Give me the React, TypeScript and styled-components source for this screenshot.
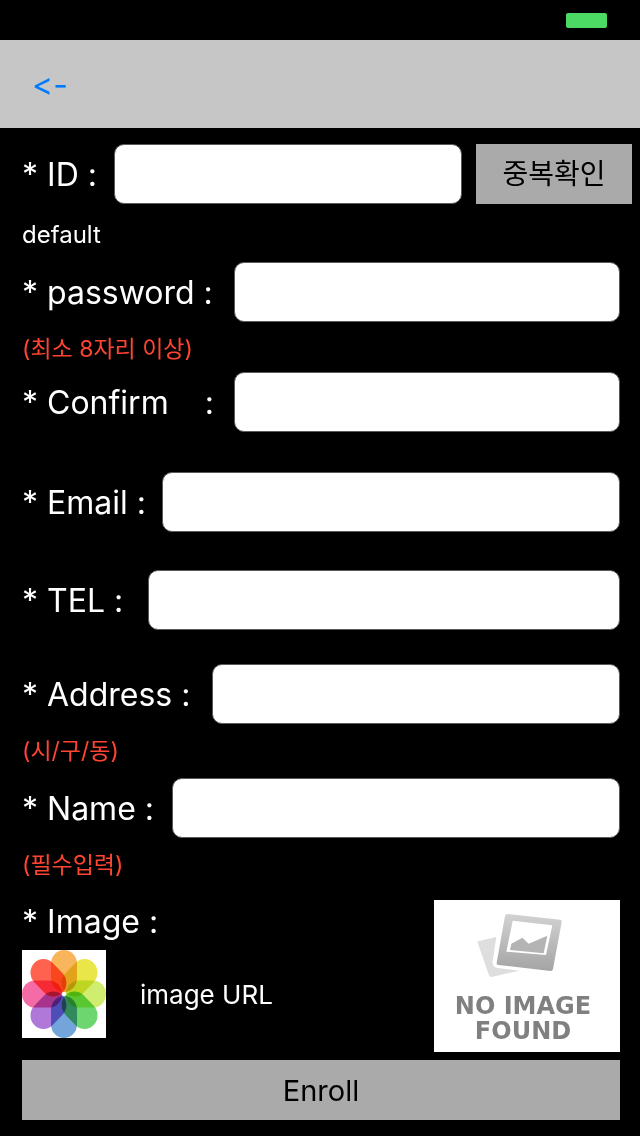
import React from 'react';
import styled, { createGlobalStyle } from 'styled-components';

const GlobalStyle = createGlobalStyle`
  * { box-sizing: border-box; }
  body {
    margin: 0;
    background: #000;
    color: #fff;
    font-family: Inter, 'Noto Sans CJK KR', sans-serif;
    font-variant-ligatures: none;
  }
`;

const Screen = styled.div`
  display: flex;
  flex-direction: column;
  min-height: 100vh;
  background: #000;
`;

const StatusBar = styled.div`
  display: flex;
  align-items: center;
  justify-content: flex-end;
  height: 40px;
  padding-right: 33px;
`;

const Battery = styled.span`
  width: 41px;
  height: 15px;
  border-radius: 2px;
  background: #4cd964;
`;

const NavBar = styled.header`
  display: flex;
  align-items: center;
  height: 88px;
  padding: 2px 32px 0;
  background: #c6c6c6;
`;

const BackButton = styled.button`
  padding: 0;
  border: 0;
  background: none;
  color: #007aff;
  font: inherit;
  font-size: 32px;
  line-height: 40px;
  font-variant-ligatures: none;
`;

const Form = styled.form`
  display: flex;
  flex-direction: column;
  padding: 16px 20px 16px 22px;
`;

const Group = styled.div<{ $gap: number }>`
  margin-bottom: ${(p) => p.$gap}px;
`;

const Row = styled.div<{ $wide?: boolean }>`
  display: flex;
  align-items: center;
  height: 60px;
  margin-right: ${(p) => (p.$wide ? '-12px' : '0')};
`;

const Label = styled.label<{ $width: number }>`
  flex: 0 0 ${(p) => p.$width}px;
  padding-top: 2px;
  font-size: 32px;
  line-height: 40px;
  white-space: pre;
`;

const Field = styled.input`
  flex: 1;
  min-width: 0;
  height: 60px;
  padding: 0 14px;
  border: 1px solid #5a5a5a;
  border-radius: 10px;
  background: #fff;
  color: #000;
  font: inherit;
  font-size: 28px;
`;

const Help = styled.p<{ $top: number; $error?: boolean }>`
  margin: ${(p) => p.$top}px 0 0;
  color: ${(p) => (p.$error ? '#ff4432' : '#fff')};
  font-size: ${(p) => (p.$error ? 23 : 24)}px;
  line-height: 30px;
`;

const GrayButton = styled.button`
  height: 60px;
  padding: 0;
  border: 0;
  background: #aaa;
  color: #000;
  font: inherit;
  font-size: 29px;
`;

const CheckButton = styled(GrayButton)`
  flex: 0 0 156px;
  margin-left: 14px;
  padding-bottom: 4px;
  font-size: 28px;
`;

const ImageSection = styled.section`
  display: flex;
  justify-content: space-between;
  margin-bottom: 8px;
`;

const ImageTitle = styled.h2`
  margin: 2px 0 8px;
  font-size: 32px;
  font-weight: 400;
  line-height: 40px;
`;

const Picker = styled.div`
  display: flex;
  align-items: center;
  gap: 34px;
  font-size: 26px;
`;

const PickButton = styled.button`
  display: flex;
  padding: 0;
  border: 0;
  background: #fff;
`;

const Preview = styled.div`
  display: flex;
  flex-direction: column;
  align-items: center;
  width: 186px;
  height: 152px;
  padding-top: 12px;
  padding-right: 8px;
  background: #fff;
`;

const PreviewText = styled.p`
  margin: 0;
  color: #808080;
  font: bold 24px/25px 'DejaVu Sans', sans-serif;
  text-align: center;
`;

const PreviewIcon = styled.svg`
  flex: none;
  margin-right: 4px;
  margin-bottom: 14px;
`;

const petals = ['#f8b55c', '#e9e64a', '#d0ed70', '#6dd66e', '#73a5da', '#af78d9', '#f56ba6', '#ff6350'];

const FlowerIcon = () => (
  <svg width="84" height="88" viewBox="0 0 84 84" preserveAspectRatio="none" aria-hidden="true">
    <rect width="84" height="84" fill="#fff" />
    {petals.map((color, i) => (
      <rect
        key={color}
        x="29"
        y="0"
        width="26"
        height="40"
        rx="13"
        fill={color}
        transform={`rotate(${i * 45} 42 42)`}
        style={{ mixBlendMode: 'multiply' }}
      />
    ))}
  </svg>
);

const NoImageIcon = () => (
  <PreviewIcon width="90" height="68" viewBox="158 54 270 204" aria-hidden="true">
    <defs>
      <linearGradient id="frame" x1="0" y1="0" x2="0" y2="1">
        <stop offset="0" stopColor="#d2d2d2" />
        <stop offset="1" stopColor="#a4a4a4" />
      </linearGradient>
    </defs>
    <path d="M167 141L219 129L208 202Q207 220 221 222L288 230L204 249Q199 249 197 244L163 146Q162 142 167 141Z" fill="#dedede" />
    <path
      d="M252 60L410 77Q416 78 415 84L389 225Q388 231 382 231L225 213Q219 212 220 206L245 66Q247 60 252 60Z"
      fill="url(#frame)"
    />
    <path d="M268 80L387 94L368 183L249 173Z" fill="#fff" />
    <path d="M264 149L297 131L316 149L372 125L361 178L260 168Z" fill="#b4b4b4" />
  </PreviewIcon>
);

interface InputRowProps {
  id: string;
  label: string;
  width: number;
  type?: string;
}

const InputRow = ({ id, label, width, type = 'text' }: InputRowProps) => (
  <Row>
    <Label htmlFor={id} $width={width}>{label}</Label>
    <Field id={id} type={type} />
  </Row>
);

export default function App() {
  return (
    <Screen>
      <GlobalStyle />
      <StatusBar><Battery /></StatusBar>
      <NavBar><BackButton type="button">&lt;-</BackButton></NavBar>
      <Form onSubmit={(e) => e.preventDefault()}>
        <Group $gap={12}>
          <Row $wide>
            <Label htmlFor="userId" $width={92}>* ID :</Label>
            <Field id="userId" type="text" />
            <CheckButton type="button">중복확인</CheckButton>
          </Row>
          <Help $top={16}>default</Help>
        </Group>
        <Group $gap={8}>
          <InputRow id="password" label="* password :" width={212} type="password" />
          <Help $top={12} $error>(최소 8자리 이상)</Help>
        </Group>
        <Group $gap={40}>
          <InputRow id="confirm" label="* Confirm    :" width={212} type="password" />
        </Group>
        <Group $gap={38}>
          <InputRow id="email" label="* Email :" width={140} type="email" />
        </Group>
        <Group $gap={34}>
          <InputRow id="tel" label="* TEL :" width={126} type="tel" />
        </Group>
        <Group $gap={12}>
          <InputRow id="address" label="* Address :" width={190} />
          <Help $top={12} $error>(시/구/동)</Help>
        </Group>
        <Group $gap={20}>
          <InputRow id="name" label="* Name :" width={150} />
          <Help $top={12} $error>(필수입력)</Help>
        </Group>
        <ImageSection>
          <div>
            <ImageTitle>* Image :</ImageTitle>
            <Picker>
              <PickButton type="button" aria-label="Choose image"><FlowerIcon /></PickButton>
              <span>image URL</span>
            </Picker>
          </div>
          <Preview>
            <NoImageIcon />
            <PreviewText>NO IMAGE<br />FOUND</PreviewText>
          </Preview>
        </ImageSection>
        <GrayButton type="submit">Enroll</GrayButton>
      </Form>
    </Screen>
  );
}
